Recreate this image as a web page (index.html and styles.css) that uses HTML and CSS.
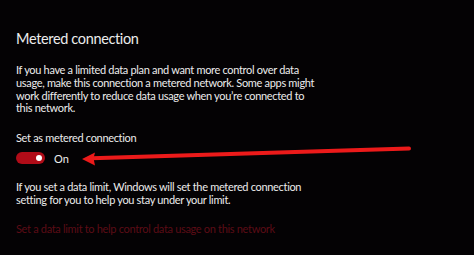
FILE: index.html
```html
<!DOCTYPE html>
<html>
<head>
<meta charset="utf-8">
<link rel="stylesheet" href="styles.css">
</head>
<body>
<div class="page">
  <h1 class="title">Metered connection</h1>
  <p class="text">If you have a limited data plan and want more control over data<br>usage, make this connection a metered network. Some apps might<br>work differently to reduce data usage when you’re connected to<br>this network.</p>
  <div class="label">Set as metered connection</div>
  <div class="toggle-row">
    <span class="toggle"><span class="knob"></span></span>
    <span class="state">On</span>
  </div>
  <p class="text note">If you set a data limit, Windows will set the metered connection<br>setting for you to help you stay under your limit.</p>
  <a class="link">Set a data limit to help control data usage on this network</a>
</div>
<svg class="arrow" width="474" height="255" viewBox="0 0 474 255">
  <line x1="92" y1="158.2" x2="409" y2="148.5" stroke="#ec1a1a" stroke-width="4" stroke-linecap="round"/>
  <polygon points="82,159 95,152.5 93.5,158.2 95,165.5" fill="#ec1a1a"/>
</svg>
</body>
</html>
```
FILE: styles.css
```css
html, body {
  margin: 0;
  padding: 0;
  background: #040204;
  width: 474px;
  height: 255px;
  overflow: hidden;
}
.page {
  padding: 29px 0 0 16px;
  font-family: Lato, "Noto Sans", sans-serif;
  color: #ececec;
}
.title {
  margin: 0;
  font-size: 14.5px;
  font-weight: 400;
  line-height: 20px;
  letter-spacing: -0.35px;
}
.text {
  margin: 15px 0 0;
  font-size: 11px;
  line-height: 12.8px;
  letter-spacing: -0.32px;
}
.label {
  margin-top: 16px;
  font-size: 11px;
  line-height: 14px;
  letter-spacing: -0.32px;
}
.toggle-row {
  display: flex;
  align-items: center;
  gap: 9px;
  margin-top: 6px;
  height: 14px;
}
.toggle {
  width: 29px;
  height: 12px;
  border-radius: 6px;
  background: #b00c18;
  display: flex;
  align-items: center;
  justify-content: flex-end;
  padding-right: 3px;
  box-sizing: border-box;
}
.knob {
  width: 6px;
  height: 6px;
  border-radius: 50%;
  background: #ffffff;
}
.state {
  font-size: 11px;
}
.note {
  margin-top: 15.6px;
}
.link {
  display: block;
  margin-top: 16px;
  font-size: 11px;
  line-height: 14px;
  letter-spacing: -0.32px;
  color: #5c0c16;
}
.arrow {
  position: absolute;
  left: 0;
  top: 0;
  pointer-events: none;
}
```
